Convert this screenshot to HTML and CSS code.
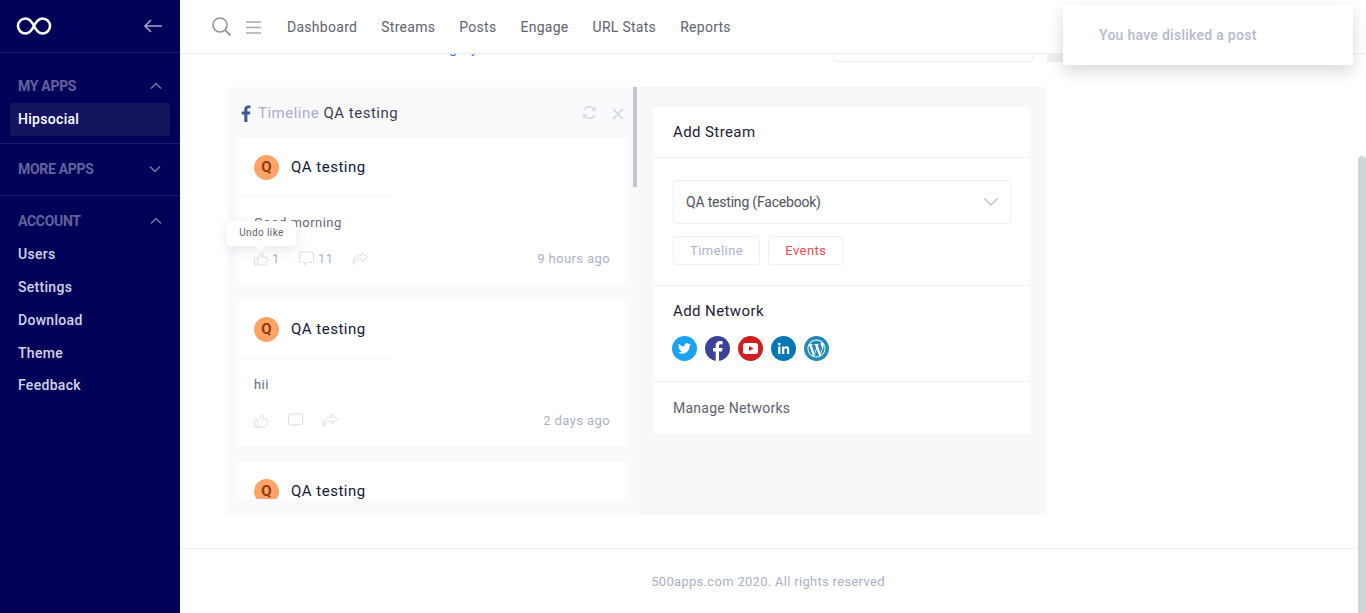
FILE: index.html
```html
<!DOCTYPE html>
<html>

<head>
    <title>Hipsocial</title>
    <meta charset="UTF-8">
    <link rel="stylesheet" href="styles.css">
</head>

<body>
    <div class="app">
        <aside class="sidebar">
            <div class="brand">
                <svg class="logo" width="36" height="20" viewBox="0 0 36 20">
                    <path d="M18 10C15.500 5 13 2.500 9.500 2.500a7.500 7.500 0 0 0 0 15c3.500 0 6-2.500 8.500-7.500c2.500-5 5-7.500 8.500-7.500a7.500 7.500 0 0 1 0 15c-3.500 0-6-2.500-8.500-7.500z" fill="none" stroke="#fff" stroke-width="2.600"/>
                </svg>
                <svg width="20" height="16" viewBox="0 0 20 16">
                    <path d="M19 8H2M8 2L2 8l6 6" fill="none" stroke="#a6a6cb" stroke-width="1.500"/>
                </svg>
            </div>
            <div class="side-group first">
                <div class="side-title">MY APPS
                    <svg class="chev" width="12" height="8" viewBox="0 0 12 8"><path d="M1 6.500l5-5 5 5" /></svg>
                </div>
                <a class="side-link active">Hipsocial</a>
            </div>
            <div class="side-group closed">
                <div class="side-title">MORE APPS
                    <svg class="chev shifted" width="12" height="8" viewBox="0 0 12 8"><path d="M1 1.500l5 5 5-5" /></svg>
                </div>
            </div>
            <div class="side-group last">
                <div class="side-title">ACCOUNT
                    <svg class="chev" width="12" height="8" viewBox="0 0 12 8"><path d="M1 6.500l5-5 5 5" /></svg>
                </div>
                <a class="side-link">Users</a>
                <a class="side-link">Settings</a>
                <a class="side-link">Download</a>
                <a class="side-link">Theme</a>
                <a class="side-link tight">Feedback</a>
            </div>
        </aside>

        <div class="main">
            <header class="topbar">
                <svg class="search" width="20" height="20" viewBox="0 0 20 20">
                    <circle cx="8" cy="8" r="7" fill="none" stroke="#8f949f" stroke-width="1.600"/>
                    <path d="M13 13l5.500 5.500" stroke="#8f949f" stroke-width="1.800"/>
                </svg>
                <svg class="burger" width="16" height="13" viewBox="0 0 16 13">
                    <path d="M0 1h15M0 6.500h15M0 12h15" stroke="#a8abb2" stroke-width="1.300"/>
                </svg>
                <nav class="topnav">
                    <a>Dashboard</a>
                    <a>Streams</a>
                    <a>Posts</a>
                    <a>Engage</a>
                    <a>URL Stats</a>
                    <a>Reports</a>
                </nav>
            </header>

            <div class="strip">
                <div class="crumb"><span>Category</span></div>
                <div class="strip-input"></div>
                <div class="strip-btn"></div>
            </div>

            <section class="board">
                <div class="stream">
                    <div class="stream-head">
                        <svg class="fb" width="10" height="17" viewBox="0 0 10 17">
                            <path d="M6.400 17V9.400h2.600l.4-3H6.400V4.600c0-.9.300-1.400 1.500-1.400h1.600V.500C9.200.400 8.300.400 7.200.400 4.900.400 3.300 1.800 3.300 4.300v2.100H.700v3h2.600V17z" fill="#3b5998"/>
                        </svg>
                        <span class="stream-title"><em>Timeline</em> QA testing</span>
                        <svg class="refresh" width="15" height="15" viewBox="0 0 15 15">
                            <path d="M13 5.500A5.800 5.800 0 0 0 2.600 4.500M2 9.500a5.800 5.800 0 0 0 10.400 1" fill="none" stroke="#d5daea" stroke-width="1.700"/>
                            <path d="M13.800 1.200v4.600H9.200zM1.200 13.800V9.200h4.600z" fill="#d5daea"/>
                        </svg>
                        <svg class="close" width="12" height="12" viewBox="0 0 12 12">
                            <path d="M1 1l10 10M11 1L1 11" stroke="#d5daea" stroke-width="1.800"/>
                        </svg>
                    </div>
                    <div class="thumb-bar"></div>
                    <div class="posts">
                        <article class="post">
                            <div class="post-head"><span class="avatar">Q</span><span class="post-name">QA testing</span></div>
                            <p class="post-text">Good morning</p>
                            <div class="post-foot">
                                <svg class="act" width="15" height="15" viewBox="0 0 16 15"><use href="#i-like"/></svg>
                                <span class="count">1</span>
                                <svg class="act act-c" width="15" height="15" viewBox="0 0 16 15"><use href="#i-comment"/></svg>
                                <span class="count wide">11</span>
                                <svg class="act act-s" width="16" height="15" viewBox="0 0 17 15"><use href="#i-share"/></svg>
                                <span class="when">9 hours ago</span>
                            </div>
                        </article>
                        <article class="post">
                            <div class="post-head"><span class="avatar">Q</span><span class="post-name">QA testing</span></div>
                            <p class="post-text">hii</p>
                            <div class="post-foot">
                                <svg class="act" width="15" height="15" viewBox="0 0 16 15"><use href="#i-like"/></svg>
                                <svg class="act act-c2" width="15" height="15" viewBox="0 0 16 15"><use href="#i-comment"/></svg>
                                <svg class="act act-c2" width="16" height="15" viewBox="0 0 17 15"><use href="#i-share"/></svg>
                                <span class="when">2 days ago</span>
                            </div>
                        </article>
                        <article class="post">
                            <div class="post-head"><span class="avatar">Q</span><span class="post-name">QA testing</span></div>
                        </article>
                    </div>
                    <div class="tip">Undo like</div>
                </div>

                <div class="side-panel">
                    <div class="add-card">
                        <h3 class="add-title">Add Stream</h3>
                        <div class="add-stream">
                            <div class="select">QA testing (Facebook)
                                <svg width="14" height="8" viewBox="0 0 14 8"><path d="M.500.500L7 7l6.500-6.500" fill="none" stroke="#b9bcc4" stroke-width="1.100"/></svg>
                            </div>
                            <div class="tabs">
                                <span class="tab">Timeline</span>
                                <span class="tab red">Events</span>
                            </div>
                        </div>
                        <div class="add-network">
                            <h3 class="net-title">Add Network</h3>
                            <div class="nets">
                                <svg class="net" viewBox="0 0 25 25"><circle cx="12.500" cy="12.500" r="12.500" fill="#1da1f2"/><g transform="translate(6 6) scale(.54)"><path fill="#fff" d="M23.953 4.570a10 10 0 01-2.825.775 4.958 4.958 0 002.163-2.723c-.951.555-2.005.959-3.127 1.184a4.920 4.920 0 00-8.384 4.482C7.690 8.095 4.067 6.130 1.640 3.162a4.822 4.822 0 00-.666 2.475c0 1.710.870 3.213 2.188 4.096a4.904 4.904 0 01-2.228-.616v.060a4.923 4.923 0 003.946 4.827 4.996 4.996 0 01-2.212.085 4.936 4.936 0 004.604 3.417 9.867 9.867 0 01-6.102 2.105c-.390 0-.779-.023-1.170-.067a13.995 13.995 0 007.557 2.209c9.053 0 13.998-7.496 13.998-13.985 0-.210 0-.420-.015-.630A9.935 9.935 0 0024 4.590z"/></g></svg>
                                <svg class="net" viewBox="0 0 25 25"><circle cx="12.500" cy="12.500" r="12.500" fill="#3b4398"/><path fill="#fff" d="M14 25v-9.500h3l.5-3.500H14V10c0-1 .400-1.700 1.800-1.700h1.800V5.200c-.400-.100-1.400-.200-2.500-.200-2.600 0-4.400 1.600-4.400 4.500V12H8v3.500h2.700V25z"/></svg>
                                <svg class="net" viewBox="0 0 25 25"><circle cx="12.500" cy="12.500" r="12.500" fill="#cd201f"/><rect x="5" y="7" width="15" height="11" rx="2.500" fill="#fff"/><path d="M11 10l4.500 2.500L11 15z" fill="#cd201f"/></svg>
                                <svg class="net" viewBox="0 0 25 25"><circle cx="12.500" cy="12.500" r="12.500" fill="#0077b5"/><g transform="translate(4.800 4.500) scale(.66)"><path fill="#fff" d="M20.447 20.452h-3.554v-5.569c0-1.328-.027-3.037-1.852-3.037-1.853 0-2.136 1.445-2.136 2.939v5.667H9.351V9h3.414v1.561h.046c.477-.9 1.637-1.850 3.370-1.850 3.601 0 4.267 2.370 4.267 5.455v6.286zM5.337 7.433a2.062 2.062 0 01-2.063-2.065 2.064 2.064 0 112.063 2.065zm1.782 13.019H3.555V9h3.564v11.452z"/></g></svg>
                                <svg class="net" viewBox="0 0 25 25"><circle cx="12.500" cy="12.500" r="12.500" fill="#2389b8"/><g transform="translate(3.500 3.500) scale(.75)"><path fill="#fff" d="M21.469 6.825c.840 1.537 1.318 3.300 1.318 5.175 0 3.979-2.156 7.456-5.363 9.325l3.295-9.527c.615-1.540.820-2.771.820-3.864 0-.405-.026-.780-.070-1.110m-7.981.105c.647-.030 1.232-.105 1.232-.105.582-.075.514-.930-.067-.899 0 0-1.755.135-2.880.135-1.064 0-2.850-.150-2.850-.150-.585-.030-.661.855-.075.885 0 0 .540.061 1.125.090l1.680 4.605-2.370 7.080L5.354 6.900c.649-.030 1.234-.100 1.234-.100.585-.075.516-.930-.065-.896 0 0-1.746.138-2.874.138-.200 0-.438-.008-.690-.015C4.911 3.150 8.235 1.215 12 1.215c2.809 0 5.365 1.072 7.286 2.833-.046-.003-.091-.009-.141-.009-1.060 0-1.812.923-1.812 1.914 0 .890.513 1.643 1.060 2.531.411.720.890 1.643.890 2.977 0 .915-.354 1.994-.821 3.479l-1.075 3.585-3.900-11.610.001.014zM12 22.784c-1.059 0-2.081-.153-3.048-.437l3.237-9.406 3.315 9.087c.024.053.050.101.078.149-1.120.393-2.325.609-3.582.609M1.211 12c0-1.564.336-3.050.935-4.390L7.290 21.709C3.694 19.960 1.212 16.271 1.211 12M12 0C5.385 0 0 5.385 0 12s5.385 12 12 12 12-5.385 12-12S18.615 0 12 0"/></g></svg>
                            </div>
                        </div>
                        <div class="manage">Manage Networks</div>
                    </div>
                </div>
            </section>

            <footer class="footer">500apps.com 2020. All rights reserved</footer>
        </div>
    </div>

    <div class="toast">You have disliked a post</div>
    <div class="page-thumb"></div>

    <svg class="defs" width="0" height="0">
        <defs>
            <g id="i-like" fill="none" stroke="#d9dce6" stroke-width="1">
                <path d="M.500 7h3.500v7.500H.500zM4 7.500c1.800-1.200 3.300-3.200 3.500-5.500 0-1.200 2-1.300 2.200.500.100 1.300-.400 2.800-.900 3.800h4.700c1.500 0 1.700 1.600.900 2.200.600.800.400 1.800-.400 2.200.300 1 0 1.700-.800 2 .100 1-.500 1.800-1.500 1.800H7.500c-1.300 0-2.300-.500-3.500-.800"/>
            </g>
            <g id="i-comment" fill="none" stroke="#d9dce6" stroke-width="1">
                <path d="M1.500.500h13a1 1 0 0 1 1 1v9a1 1 0 0 1-1 1H8.500l-2.500 3v-3H1.500a1 1 0 0 1-1-1v-9a1 1 0 0 1 1-1z"/>
            </g>
            <g id="i-share" fill="none" stroke="#d9dce6" stroke-width="1">
                <path d="M10.500 1l6 5-6 5V8C6 7.800 3 9.500 1.500 14 .300 8.500 4 4.200 10.500 3.900z"/>
            </g>
        </defs>
    </svg>
</body>

</html>
```
FILE: styles.css
```css
* {
    box-sizing: border-box;
}
html, body {
    margin: 0;
    height: 100%;
    overflow: hidden;
}
body {
    font-family: Roboto, "Liberation Sans", sans-serif;
    font-size: 14px;
    color: #5f6270;
    background: #fff;
}
.defs {
    position: absolute;
}
.app {
    display: flex;
    height: 613px;
}

/* sidebar */
.sidebar {
    width: 180px;
    flex: none;
    background: #020259;
}
.brand {
    height: 53px;
    padding: 0 17px 0 16px;
    display: flex;
    align-items: center;
    justify-content: space-between;
    border-bottom: 1px solid #1c1c68;
}
.side-group {
    border-bottom: 1px solid #1c1c68;
    padding: 0 10px;
}
.side-group.first {
    height: 91px;
    padding-top: 23px;
}
.side-group.closed {
    height: 52px;
    padding-top: 15px;
}
.side-group.last {
    border-bottom: 0;
    padding-top: 15px;
}
.side-title {
    height: 20px;
    padding: 0 8px;
    display: flex;
    align-items: center;
    justify-content: space-between;
    font-weight: 700;
    font-size: 14px;
    letter-spacing: -.3px;
    color: #62629b;
}
.chev {
    fill: none;
    stroke: #7a7aa8;
    stroke-width: 1.300;
}
.chev.shifted {
    margin-right: 1px;
}
.side-link {
    display: block;
    height: 33px;
    line-height: 33px;
    padding: 0 8px;
    font-weight: 500;
    font-size: 14px;
    letter-spacing: .3px;
    color: #d3d3e6;
    border-radius: 3px;
}
.side-link.tight {
    height: 32px;
    line-height: 31px;
}
.side-group.first .side-link {
    margin-top: 7px;
}
.side-group.last .side-link:first-of-type {
    margin-top: 7px;
}
.side-link.active {
    background: #14145f;
    color: #fff;
}

/* top */
.main {
    flex: 1;
    min-width: 0;
}
.topbar {
    height: 54px;
    padding-left: 32px;
    display: flex;
    align-items: center;
    border-bottom: 1px solid #eef0f4;
}
.search {
    margin-top: 1px;
}
.burger {
    margin: 2px 0 0 14px;
}
.topnav {
    margin-left: 25px;
    display: flex;
    gap: 24px;
}
.topnav a {
    letter-spacing: .28px;
    color: #5f6270;
}
.strip {
    height: 8px;
    display: flex;
    align-items: flex-start;
}
.crumb {
    margin-left: 239px;
    height: 3px;
    display: flex;
    align-items: flex-end;
    overflow: hidden;
    line-height: 18px;
    color: #3a6ff0;
    letter-spacing: .35px;
}
.strip-input {
    margin-left: auto;
    width: 200px;
    height: 8px;
    border: 1px solid #eef0f4;
    border-top: 0;
    border-radius: 0 0 3px 3px;
}
.strip-btn {
    margin: 0 219px 0 14px;
    width: 100px;
    height: 8px;
    background: #eef0f5;
}

/* board */
.board {
    margin: 25px 0 0 47px;
    width: 820px;
    height: 428px;
    display: flex;
}
.stream {
    position: relative;
    width: 410px;
    display: flex;
    flex-direction: column;
    padding: 0 10px 16px;
    background: #fafafd;
}
.thumb-bar {
    position: absolute;
    top: 0;
    right: 0;
    width: 4px;
    height: 100px;
    background: #c4c6ca;
}
.stream-head {
    height: 51px;
    flex: none;
    display: flex;
    align-items: center;
    padding: 0 3px 0 4px;
}
.fb {
    margin-top: 1px;
}
.stream-title {
    margin-left: 7px;
    font-size: 15px;
    letter-spacing: .5px;
    color: #3b3e52;
}
.stream-title em {
    font-style: normal;
    color: #a9aec6;
}
.refresh {
    margin-left: auto;
    margin-top: -1px;
}
.close {
    margin-left: 15px;
    margin-top: 2px;
}
.posts {
    flex: 1;
    min-height: 0;
    overflow: hidden;
    display: flex;
    flex-direction: column;
    gap: 16px;
}
.post {
    flex: none;
    height: 146px;
    background: #fff;
    border-radius: 4px;
}
.post-head {
    width: 155px;
    height: 59px;
    padding-left: 17px;
    display: flex;
    align-items: center;
    border-bottom: 1px solid #f4f4f8;
}
.avatar {
    width: 25px;
    height: 25px;
    border-radius: 50%;
    background: #ffa366;
    color: #8f3a12;
    font-weight: 700;
    font-size: 15px;
    line-height: 25px;
    text-align: center;
}
.post-name {
    margin-left: 12px;
    font-size: 15px;
    letter-spacing: .5px;
    white-space: nowrap;
    color: #14163a;
}
.post-text {
    margin: 16px 0 0 17px;
    height: 20px;
    line-height: 20px;
    font-size: 13px;
    letter-spacing: .45px;
    color: #666979;
}
.post-foot {
    margin-top: 15px;
    padding: 0 17px;
    display: flex;
    align-items: center;
    height: 20px;
    color: #adb2c7;
    font-size: 13px;
    letter-spacing: .4px;
}
.count {
    margin-left: 3px;
    width: 8px;
}
.count.wide {
    margin-left: 4px;
    width: 14px;
}
.act-c {
    margin-left: 19px;
}
.act-s {
    margin-left: 20px;
}
.act-c2 {
    margin-left: 19px;
}
.when {
    margin-left: auto;
}
.tip {
    position: absolute;
    left: 0;
    top: 134px;
    width: 69px;
    height: 25px;
    line-height: 24px;
    text-align: center;
    font-size: 10px;
    letter-spacing: .4px;
    color: #5f6270;
    background: #fff;
    border-radius: 4px;
    box-shadow: 0 4px 14px rgba(60, 64, 90, .12);
}
.tip::after {
    content: "";
    position: absolute;
    left: 28px;
    bottom: -5px;
    border: 6px solid transparent;
    border-bottom: 0;
    border-top-color: #fff;
}

/* right side */
.side-panel {
    width: 410px;
    padding: 20px 16px 0;
    background: #f7f8fa;
}
.add-card {
    background: #fff;
    border-radius: 4px;
    height: 327px;
}
.add-title {
    margin: 0;
    height: 51px;
    padding: 0 20px;
    line-height: 51px;
    font-weight: 400;
    font-size: 15px;
    letter-spacing: .4px;
    color: #1e2038;
    border-bottom: 1px solid #f1f2f5;
}
.add-stream {
    height: 128px;
    padding: 22px 20px 0;
    border-bottom: 1px solid #f1f2f5;
}
.select {
    height: 44px;
    padding: 0 12px;
    display: flex;
    align-items: center;
    justify-content: space-between;
    border: 1px solid #eef0f4;
    border-radius: 4px;
    letter-spacing: -.2px;
    color: #50535f;
}
.tabs {
    margin-top: 12px;
    display: flex;
    gap: 8px;
}
.tab {
    height: 29px;
    line-height: 27px;
    padding: 0 16px;
    border: 1px solid #eef0f4;
    border-radius: 3px;
    font-size: 13px;
    letter-spacing: .45px;
    color: #adb2c7;
}
.tab.red {
    color: #ec4a55;
}
.add-network {
    height: 96px;
    padding: 15px 20px 0 19px;
    border-bottom: 1px solid #f1f2f5;
}
.net-title {
    margin: 0;
    padding-left: 1px;
    height: 20px;
    line-height: 20px;
    font-weight: 400;
    font-size: 15px;
    letter-spacing: .4px;
    color: #1e2038;
}
.nets {
    margin-top: 15px;
    display: flex;
    gap: 8px;
}
.net {
    width: 25px;
    height: 25px;
}
.manage {
    padding: 0 20px;
    line-height: 52px;
    letter-spacing: .25px;
    color: #5f6270;
}

/* footer */
.footer {
    margin-top: 33px;
    height: 65px;
    padding: 24px 10px 0 0;
    border-top: 1px solid #eef0f4;
    line-height: 18px;
    text-align: center;
    font-size: 13px;
    letter-spacing: .3px;
    color: #aab0c4;
}

/* overlays */
.toast {
    position: absolute;
    left: 1063px;
    top: 5px;
    width: 290px;
    height: 60px;
    padding-left: 36px;
    line-height: 61px;
    font-weight: 500;
    letter-spacing: .28px;
    color: #b6bacb;
    background: #fff;
    border-radius: 4px;
    box-shadow: 0 6px 16px rgba(40, 44, 60, .18);
}
.page-thumb {
    position: absolute;
    top: 156px;
    right: 0;
    width: 8px;
    height: 457px;
    background: #cdd5d9;
    border-radius: 4px 4px 0 0;
}
```
